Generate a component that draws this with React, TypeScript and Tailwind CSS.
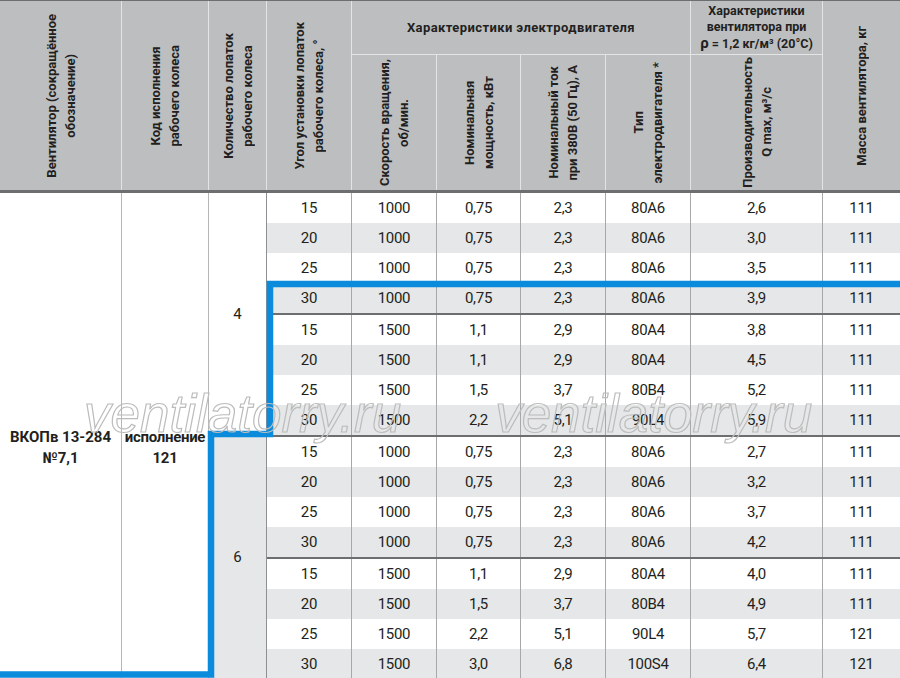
import React from 'react';

const rows = [
  ['15', '1000', '0,75', '2,3', '80A6', '2,6', '111'],
  ['20', '1000', '0,75', '2,3', '80A6', '3,0', '111'],
  ['25', '1000', '0,75', '2,3', '80A6', '3,5', '111'],
  ['30', '1000', '0,75', '2,3', '80A6', '3,9', '111'],
  ['15', '1500', '1,1', '2,9', '80A4', '3,8', '111'],
  ['20', '1500', '1,1', '2,9', '80A4', '4,5', '111'],
  ['25', '1500', '1,5', '3,7', '80B4', '5,2', '111'],
  ['30', '1500', '2,2', '5,1', '90L4', '5,9', '111'],
  ['15', '1000', '0,75', '2,3', '80A6', '2,7', '111'],
  ['20', '1000', '0,75', '2,3', '80A6', '3,2', '111'],
  ['25', '1000', '0,75', '2,3', '80A6', '3,7', '111'],
  ['30', '1000', '0,75', '2,3', '80A6', '4,2', '111'],
  ['15', '1500', '1,1', '2,9', '80A4', '4,0', '111'],
  ['20', '1500', '1,5', '3,7', '80B4', '4,9', '111'],
  ['25', '1500', '2,2', '5,1', '90L4', '5,7', '121'],
  ['30', '1500', '3,0', '6,8', '100S4', '6,4', '121'],
];

// группы по 4 строки (смена скорости)
const groups = [rows.slice(0, 4), rows.slice(4, 8), rows.slice(8, 12), rows.slice(12, 16)];

const Vert = ({ children }: { children: React.ReactNode }) => (
  <span className="[writing-mode:vertical-rl] rotate-180 text-center leading-[19px] whitespace-nowrap">{children}</span>
);

const HeadCell = ({ className = '', children }: { className?: string; children: React.ReactNode }) => (
  <div className={`flex items-center justify-center border-r border-[#e3e4e5] bg-[#bcbec0] ${className}`}>
    {children}
  </div>
);

const App = () => {
  return (
    <div className="relative w-[900px] h-[678px] overflow-hidden bg-white text-[#231f20] font-['Roboto','Liberation_Sans',sans-serif]">
      {/* шапка */}
      <div className="grid grid-cols-[122px_87px_58px_85px_85px_84px_85px_85px_132px_77px] grid-rows-[54px_135px] border-t border-b-[3px] border-[#6d6e70] text-[13px] font-bold">
        <HeadCell className="row-span-2">
          <Vert>Вентилятор (сокращённое<br />обозначение)</Vert>
        </HeadCell>
        <HeadCell className="row-span-2">
          <Vert>Код исполнения<br />рабочего колеса</Vert>
        </HeadCell>
        <HeadCell className="row-span-2">
          <Vert>Количество лопаток<br />рабочего колеса</Vert>
        </HeadCell>
        <HeadCell className="row-span-2">
          <Vert>Угол установки лопаток<br />рабочего колеса, °</Vert>
        </HeadCell>
        <HeadCell className="col-span-4 border-b tracking-[0.4px]">Характеристики электродвигателя</HeadCell>
        <HeadCell className="border-b">
          <div className="text-center leading-[16.5px] text-[12.5px] whitespace-nowrap">
            Характеристики<br />вентилятора при<br />
            <span className="text-[15px] leading-none">ρ</span> = 1,2 кг/м³ (20°C)
          </div>
        </HeadCell>
        <HeadCell className="row-span-2 border-r-0">
          <Vert>Масса вентилятора, кг</Vert>
        </HeadCell>
        <HeadCell>
          <Vert>Скорость вращения,<br />об/мин.</Vert>
        </HeadCell>
        <HeadCell>
          <Vert>Номинальная<br />мощность, кВт</Vert>
        </HeadCell>
        <HeadCell>
          <Vert>Номинальный ток<br />при 380В (50 Гц), А</Vert>
        </HeadCell>
        <HeadCell>
          <Vert>Тип<br />электродвигателя *</Vert>
        </HeadCell>
        <HeadCell>
          <Vert>Производительность<br />Q max, м³/с</Vert>
        </HeadCell>
      </div>

      {/* тело таблицы */}
      <div className="flex text-[15px]">
        <div className="w-[122px] shrink-0 flex items-center justify-center pt-6 border-r border-[#b5b6b8] font-bold text-center leading-[21px]">
          ВКОПв 13-284<br />№7,1
        </div>
        <div className="w-[87px] shrink-0 flex items-center justify-center pt-6 border-r border-[#b5b6b8] font-bold text-center leading-[21px] tracking-[-0.3px]">
          исполнение<br />121
        </div>
        <div className="w-[58px] shrink-0 flex flex-col">
          <div className="h-[243px] flex items-center justify-center border-r border-[#8f9093]">4</div>
          <div className="flex-1 flex items-center justify-center bg-[#e6e7e8] border-r border-[#8f9093]">6</div>
        </div>
        <div className="flex-1 flex flex-col tracking-[-0.3px]">
          {groups.map((g, gi) => (
            <div key={gi} className={gi < 3 ? 'border-b-2 border-[#6d6e70]' : ''}>
              {g.map((r, ri) => (
                <div
                  key={ri}
                  className={`grid grid-cols-[85px_85px_84px_85px_85px_132px_77px] h-[30px] ${ri % 2 === 1 ? 'bg-[#e6e7e8]' : 'bg-white'}`}
                >
                  {r.map((v, ci) => (
                    <div
                      key={ci}
                      className={`flex items-center justify-center ${ci < 6 ? 'border-r border-[#a7a8aa]' : ''}`}
                    >
                      {v}
                    </div>
                  ))}
                </div>
              ))}
            </div>
          ))}
        </div>
      </div>

      {/* синяя рамка выделения */}
      <svg className="absolute inset-0 pointer-events-none" width="900" height="678" viewBox="0 0 900 678">
        <polyline
          points="900,284 270,284 270,434 211,434 211,674.5 0,674.5"
          fill="none"
          stroke="#0a8bdc"
          strokeWidth="6.5"
          strokeLinejoin="miter"
        />
      </svg>

      {/* водяной знак */}
      <div className="absolute left-0 top-[387px] w-full flex pointer-events-none font-['Liberation_Sans',sans-serif] italic text-[53px] leading-none text-transparent [-webkit-text-stroke:1.2px_#bcbcbc] whitespace-nowrap">
        <span className="ml-[84px]">ventilatorry.ru</span>
        <span className="ml-[94px]">ventilatorry.ru</span>
      </div>
    </div>
  );
};

export default App;
